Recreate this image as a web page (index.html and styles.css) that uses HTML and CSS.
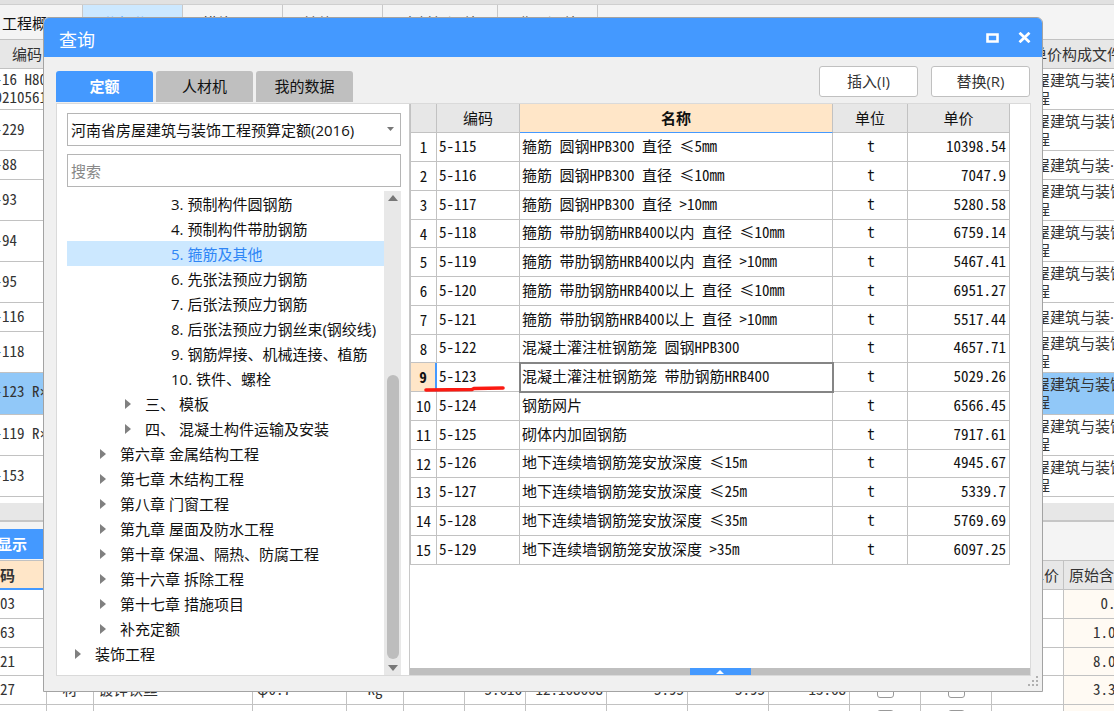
FILE: index.html
```
<!DOCTYPE html>
<html lang="zh-CN">
<head>
<meta charset="utf-8">
<title>查询</title>
<link rel="stylesheet" href="styles.css">
</head>
<body>
<svg class="defs" aria-hidden="true">
  <symbol id="caret" viewBox="0 0 6 10"><path d="M0 0 6 5 0 10z" fill="#808080"/></symbol>
</svg>

<main class="workspace">
  <div class="topstrip"></div>
  <nav class="pages">
    <button class="page page-first">工程概况</button>
    <button class="page page-active">分部分项</button>
    <button class="page">措施项目</button>
    <button class="page">其他项目</button>
    <button class="page page-wide">人材机汇总</button>
    <button class="page">费用汇总</button>
  </nav>

  <div class="sheet-wrap">
    <table class="sheet">
      <colgroup><col class="s-code"><col><col class="s-file"></colgroup>
      <thead><tr><th>编码</th><th></th><th class="file">单价构成文件</th></tr></thead>
      <tbody>
        <tr><td>5-16 H80<br>80210561</td><td></td><td class="file">屋建筑与装饰工程</td></tr>
        <tr><td>5-229</td><td></td><td class="file">屋建筑与装饰工程</td></tr>
        <tr class="short"><td>5-88</td><td></td><td class="file">屋建筑与装···</td></tr>
        <tr><td>5-93</td><td></td><td class="file">屋建筑与装饰工程</td></tr>
        <tr><td>5-94</td><td></td><td class="file">屋建筑与装饰工程</td></tr>
        <tr><td>5-95</td><td></td><td class="file">屋建筑与装饰工程</td></tr>
        <tr class="short"><td>5-116</td><td></td><td class="file">屋建筑与装···</td></tr>
        <tr><td>5-118</td><td></td><td class="file">屋建筑与装饰工程</td></tr>
        <tr class="current"><td>5-123 R<span class="times">×</span></td><td></td><td class="file">屋建筑与装饰工程</td></tr>
        <tr><td>5-119 R<span class="times">×</span></td><td></td><td class="file">屋建筑与装饰工程</td></tr>
        <tr><td>5-153</td><td></td><td class="file">屋建筑与装饰工程</td></tr>
      </tbody>
    </table>
  </div>

  <div class="hscroll"></div>
  <div class="subtabs"><button class="subtab">显示</button></div>

  <div class="detail-wrap">
    <table class="detail">
      <colgroup>
        <col class="w46"><col class="w48"><col class="w159"><col class="w94"><col class="w57"><col class="w61"><col class="w61"><col class="w80"><col class="w81"><col class="w81"><col class="w81"><col class="w71"><col class="w71"><col><col class="w78">
      </colgroup>
      <thead><tr><th class="hot">码</th><th>类别</th><th>名称</th><th>规格</th><th>单位</th><th></th><th></th><th></th><th></th><th></th><th></th><th></th><th></th><th class="price">供应单价</th><th class="raw">原始含量</th></tr></thead>
      <tbody>
        <tr><td>03</td><td></td><td></td><td></td><td></td><td></td><td></td><td></td><td></td><td></td><td></td><td></td><td></td><td></td><td class="num tint">0.616</td></tr>
        <tr><td>63</td><td></td><td></td><td></td><td></td><td></td><td></td><td></td><td></td><td></td><td></td><td></td><td></td><td></td><td class="num tint">1.0200</td></tr>
        <tr><td>21</td><td></td><td></td><td></td><td></td><td></td><td></td><td></td><td></td><td></td><td></td><td></td><td></td><td></td><td class="num tint">8.0900</td></tr>
        <tr><td>27</td><td class="mid">材</td><td class="name">镀锌铁丝</td><td class="name">φ0.7</td><td class="mid">kg</td><td></td><td class="num">5.616</td><td class="num">12.168668</td><td class="num">5.95</td><td class="num">5.95</td><td class="num">13.68</td><td class="mid"><input type="checkbox" aria-label="是否暂估"></td><td class="mid"><input type="checkbox" aria-label="锁定"></td><td></td><td class="num tint">3.3730</td></tr>
        <tr><td></td><td class="mid">材</td><td class="name">水</td><td></td><td></td><td></td><td></td><td></td><td></td><td></td><td></td><td class="mid"><input type="checkbox" aria-label="是否暂估"></td><td class="mid"><input type="checkbox" aria-label="锁定"></td><td></td><td class="num tint"></td></tr>
      </tbody>
    </table>
  </div>
</main>

<section class="dialog" role="dialog" aria-labelledby="dialog-title">
  <header class="titlebar">
    <h1 id="dialog-title">查询</h1>
    <button class="winbtn" aria-label="最大化"><svg width="13" height="10" viewBox="0 0 13 10"><path d="M1.5 1.5h10v7h-10z" fill="none" stroke="#fff" stroke-width="2.6"/></svg></button>
    <button class="winbtn" aria-label="关闭"><svg width="13" height="11" viewBox="0 0 13 11"><path d="M1.5.8 11.5 10.2M11.5.8 1.5 10.2" stroke="#fff" stroke-width="2.8"/></svg></button>
  </header>

  <div class="toolbar">
    <div class="tabs" role="tablist">
      <button class="tab tab-active" role="tab" aria-selected="true">定额</button>
      <button class="tab" role="tab">人材机</button>
      <button class="tab" role="tab">我的数据</button>
    </div>
    <div class="actions">
      <button class="action">插入(I)</button>
      <button class="action">替换(R)</button>
    </div>
  </div>

  <div class="panes">
    <div class="side">
      <div class="combo">
        <select aria-label="定额库"><option>河南省房屋建筑与装饰工程预算定额(2016)</option></select>
        <svg class="combo-arrow" width="7" height="4" viewBox="0 0 7 4"><path d="M0 0h7L3.5 4z" fill="#777"/></svg>
      </div>
      <input class="search" type="text" placeholder="搜索" aria-label="搜索">
      <div class="tree-box">
        <ul class="tree" role="tree">
          <li class="leaf" role="treeitem">3. 预制构件圆钢筋</li>
          <li class="leaf" role="treeitem">4. 预制构件带肋钢筋</li>
          <li class="leaf chosen" role="treeitem" aria-selected="true">5. 箍筋及其他</li>
          <li class="leaf" role="treeitem">6. 先张法预应力钢筋</li>
          <li class="leaf" role="treeitem">7. 后张法预应力钢筋</li>
          <li class="leaf" role="treeitem">8. 后张法预应力钢丝束(钢绞线)</li>
          <li class="leaf" role="treeitem">9. 钢筋焊接、机械连接、植筋</li>
          <li class="leaf" role="treeitem">10. 铁件、螺栓</li>
          <li class="part" role="treeitem"><svg class="caret"><use href="#caret"/></svg>三、 模板</li>
          <li class="part" role="treeitem"><svg class="caret"><use href="#caret"/></svg>四、 混凝土构件运输及安装</li>
          <li class="chapter" role="treeitem"><svg class="caret"><use href="#caret"/></svg>第六章 金属结构工程</li>
          <li class="chapter" role="treeitem"><svg class="caret"><use href="#caret"/></svg>第七章 木结构工程</li>
          <li class="chapter" role="treeitem"><svg class="caret"><use href="#caret"/></svg>第八章 门窗工程</li>
          <li class="chapter" role="treeitem"><svg class="caret"><use href="#caret"/></svg>第九章 屋面及防水工程</li>
          <li class="chapter" role="treeitem"><svg class="caret"><use href="#caret"/></svg>第十章 保温、隔热、防腐工程</li>
          <li class="chapter" role="treeitem"><svg class="caret"><use href="#caret"/></svg>第十六章 拆除工程</li>
          <li class="chapter" role="treeitem"><svg class="caret"><use href="#caret"/></svg>第十七章 措施项目</li>
          <li class="chapter" role="treeitem"><svg class="caret"><use href="#caret"/></svg>补充定额</li>
          <li class="root" role="treeitem"><svg class="caret"><use href="#caret"/></svg>装饰工程</li>
        </ul>
        <div class="scroll">
          <svg width="10" height="6" viewBox="0 0 10 6"><path d="M0 6h10L5 0z" fill="#777"/></svg>
          <div class="track"><div class="thumb"></div></div>
          <svg width="10" height="6" viewBox="0 0 10 6"><path d="M0 0h10L5 6z" fill="#777"/></svg>
        </div>
      </div>
    </div>

    <div class="main">
      <div class="grid-area">
        <table class="grid">
          <colgroup><col class="g-no"><col class="g-code"><col><col class="g-unit"><col class="g-price"></colgroup>
          <thead><tr><th></th><th>编码</th><th class="hot">名称</th><th>单位</th><th>单价</th></tr></thead>
          <tbody>
            <tr><th>1</th><td>5-115</td><td>箍筋 圆钢HPB300 直径 ≤5mm</td><td class="mid">t</td><td class="num">10398.54</td></tr>
            <tr><th>2</th><td>5-116</td><td>箍筋 圆钢HPB300 直径 ≤10mm</td><td class="mid">t</td><td class="num">7047.9</td></tr>
            <tr><th>3</th><td>5-117</td><td>箍筋 圆钢HPB300 直径 &gt;10mm</td><td class="mid">t</td><td class="num">5280.58</td></tr>
            <tr><th>4</th><td>5-118</td><td>箍筋 带肋钢筋HRB400以内 直径 ≤10mm</td><td class="mid">t</td><td class="num">6759.14</td></tr>
            <tr><th>5</th><td>5-119</td><td>箍筋 带肋钢筋HRB400以内 直径 &gt;10mm</td><td class="mid">t</td><td class="num">5467.41</td></tr>
            <tr><th>6</th><td>5-120</td><td>箍筋 带肋钢筋HRB400以上 直径 ≤10mm</td><td class="mid">t</td><td class="num">6951.27</td></tr>
            <tr><th>7</th><td>5-121</td><td>箍筋 带肋钢筋HRB400以上 直径 &gt;10mm</td><td class="mid">t</td><td class="num">5517.44</td></tr>
            <tr><th>8</th><td>5-122</td><td>混凝土灌注桩钢筋笼 圆钢HPB300</td><td class="mid">t</td><td class="num">4657.71</td></tr>
            <tr class="picked"><th>9<svg class="mark" width="82" height="7" viewBox="0 0 82 7"><path d="M2 5 48 4.500 50 3.500 79 3" fill="none" stroke="#fb1a12" stroke-width="3.600" stroke-linecap="round"/></svg></th><td>5-123</td><td class="cursor">混凝土灌注桩钢筋笼 带肋钢筋HRB400</td><td class="mid">t</td><td class="num">5029.26</td></tr>
            <tr><th>10</th><td>5-124</td><td>钢筋网片</td><td class="mid">t</td><td class="num">6566.45</td></tr>
            <tr><th>11</th><td>5-125</td><td>砌体内加固钢筋</td><td class="mid">t</td><td class="num">7917.61</td></tr>
            <tr><th>12</th><td>5-126</td><td>地下连续墙钢筋笼安放深度 ≤15m</td><td class="mid">t</td><td class="num">4945.67</td></tr>
            <tr><th>13</th><td>5-127</td><td>地下连续墙钢筋笼安放深度 ≤25m</td><td class="mid">t</td><td class="num">5339.7</td></tr>
            <tr><th>14</th><td>5-128</td><td>地下连续墙钢筋笼安放深度 ≤35m</td><td class="mid">t</td><td class="num">5769.69</td></tr>
            <tr><th>15</th><td>5-129</td><td>地下连续墙钢筋笼安放深度 &gt;35m</td><td class="mid">t</td><td class="num">6097.25</td></tr>
          </tbody>
        </table>
      </div>
      <div class="splitter"><button class="splitter-grip" aria-label="展开"><svg width="8" height="4" viewBox="0 0 8 4"><path d="M0 4h8L4 0z" fill="#fff"/></svg></button></div>
    </div>
  </div>
  <svg class="resize" width="10" height="10" viewBox="0 0 10 10"><path d="M8 0h2v2H8zM4 4h2v2H4zM8 4h2v2H8zM0 8h2v2H0zM4 8h2v2H4zM8 8h2v2H8z" fill="#b0b0b0"/></svg>
</section>
</body>
</html>
```
FILE: styles.css
```
:root {
  --ui: "Open Sans", "Noto Sans CJK SC", sans-serif;
  --cell: "Noto Sans Mono CJK SC", "Liberation Mono", "Noto Sans CJK SC", monospace;
  --blue: #4499ff;
  --line: #c2c2c2;
  --head: #e7e7e7;
  --hot: #ffe6c8;
}

* { box-sizing: border-box; }

body {
  margin: 0;
  height: 100vh;
  overflow: hidden;
  position: relative;
  background: #fff;
  color: #111;
  font: 15px/20px var(--ui);
}

button, input, select { font: inherit; color: inherit; margin: 0; }
button { border: 0; padding: 0; background: none; white-space: nowrap; }
table { border-collapse: separate; border-spacing: 0; table-layout: fixed; }
th, td { padding: 0; border: 0 solid var(--line); border-width: 0 1px 1px 0; white-space: nowrap; overflow: hidden; }
th { font-weight: 400; }
.defs { position: absolute; width: 0; height: 0; }

/* main window */
.workspace { display: flex; flex-direction: column; height: 100%; overflow: hidden; color: #333; }
.topstrip { flex: none; height: 5px; background: #e1e1e1; border-bottom: 1px solid #cfcfcf; }
.pages { flex: none; display: flex; height: 34px; background: #f4f4f4; }
.page { width: 100px; padding-top: 2px; border-right: 1px solid #c8c8c8; }
.page-first { width: 83px; padding-left: 2px; text-align: left; color: #111; }
.page-wide { width: 115px; }
.page-active { background: #cce8ff; color: var(--blue); }

.sheet-wrap, .detail-wrap { flex: none; overflow: hidden; }
.sheet { width: calc(100% + 43px); margin-left: -16px; font: 15px/18px var(--cell); }
.s-code { width: 80px; }
.s-file { width: 109px; }
.sheet th { height: 30px; background: var(--head); border-top: 1px solid var(--line); text-align: left; padding-left: 28px; font: 15px/20px var(--ui); }
.sheet td { height: 41px; padding: 0 0 2px 3px; border-right: 0; }
.sheet .short td { height: 29px; }
.sheet th.file { padding-left: 0; }
.sheet td.file { padding: 0 0 1px 3px; white-space: normal; word-break: break-all; font-family: var(--ui); }
.sheet .current td { background: #91c8f8; height: 42px; }
.times { font-family: "Liberation Mono", monospace; }

.hscroll { flex: none; height: 19px; margin-top: 6px; background: var(--head); border-bottom: 2px solid #c6c6c6; }
.subtabs { flex: none; height: 38px; padding-top: 7px; background: #f4f4f4; }
.subtab { width: 120px; height: 30px; margin-left: -3px; background: var(--blue); color: #fff; font-weight: 700; text-align: left; }

.detail { width: calc(100% + 28px); font: 15px/18px var(--cell); }
.detail th { height: 30px; background: var(--head); border-top: 1px solid var(--line); font: 15px/20px var(--ui); }
.detail td { height: 29px; padding-bottom: 2px; }
.detail tr:nth-child(3) td { height: 28px; }
.detail .hot { text-align: left; font-weight: 700; background: var(--hot); border-bottom: 2px solid var(--blue); }
.detail .price { padding-right: 4px; text-align: right; }
.detail .raw { padding-left: 5px; text-align: left; }
.detail .name { padding-left: 4px; }
.detail .tint { background: #fffaf3; }
.detail input { appearance: none; display: block; width: 17px; height: 17px; margin: 0 auto; border: 1px solid #999; border-radius: 3px; background: #fff; }
.w46 { width: 47px; }
.w48 { width: 47px; }
.w57 { width: 57px; }
.w61 { width: 61px; }
.w71 { width: 71px; }
.w78 { width: 78px; }
.w80 { width: 81px; }
.w81 { width: 81px; }
.w94 { width: 94px; }
.w159 { width: 159px; }

td.mid { text-align: center; }
td.num { text-align: right; padding-right: 3px; }

/* query dialog floating over the window */
.dialog {
  position: absolute;
  inset: 17px 71px 19px 43px;
  display: flex;
  flex-direction: column;
  padding-bottom: 15px;
  background: #f0f0f0;
  border: 1px solid #a3a3a3;
  border-radius: 6px 6px 0 0;
  overflow: hidden;
}
.titlebar { flex: none; display: flex; align-items: center; gap: 19px; height: 39px; padding: 0 11px 0 15px; background: var(--blue); color: #fff; }
.titlebar h1 { flex: 1; margin: 4px 0 0; font: 400 18px/24px var(--ui); }
.winbtn { display: flex; }

.toolbar { flex: none; display: flex; justify-content: space-between; align-items: flex-end; height: 46px; padding: 0 12px 1px 12px; }
.tabs { display: flex; gap: 3px; }
.tab { width: 97px; height: 31px; padding-bottom: 2px; background: #bfbfbf; border-radius: 3px 3px 0 0; }
.tab-active { background: var(--blue); color: #fff; font-weight: 700; }
.actions { display: flex; gap: 13px; padding-bottom: 5px; }
.action { width: 99px; height: 31px; padding-bottom: 2px; background: #fff; border: 1px solid #c0c0c0; border-radius: 3px; color: #333; }

.panes { flex: 1; min-height: 0; display: flex; margin: 0 11px 0 12px; background: #fff; border: 1px solid #dadada; }
.side { flex: none; width: 352px; display: flex; flex-direction: column; gap: 8px; padding: 9px 8px 0 10px; }
.combo { position: relative; flex: none; height: 33px; }
.combo select { appearance: none; width: 100%; height: 100%; padding: 0 24px 0 3px; background: #fff; border: 1px solid #b5b5b5; border-radius: 0; }
.combo-arrow { position: absolute; right: 7px; top: 14px; }
.search { flex: none; width: 100%; height: 33px; padding: 0 3px; border: 1px solid #b5b5b5; border-radius: 0; }
.search::placeholder { color: #888; }
.tree-box { flex: 1; min-height: 0; display: flex; margin-top: -4px; }
.tree { flex: 1; margin: 0; padding: 0; list-style: none; overflow: hidden; }
.tree li { display: flex; align-items: center; height: 25px; white-space: pre; }
.caret { flex: none; width: 6px; height: 10px; margin-right: 14px; }
.leaf { padding-left: 104px; }
.part { padding-left: 58px; }
.chapter { padding-left: 33px; }
.root { padding-left: 8px; }
.chosen { background: #cce8ff; color: #2f86f6; }
.scroll { flex: none; width: 17px; display: flex; flex-direction: column; align-items: center; justify-content: space-between; padding: 4px 0; background: #e8e8e8; }
.track { flex: 1; width: 12px; display: flex; flex-direction: column; justify-content: flex-end; padding-bottom: 6px; }
.thumb { height: 62%; background: #bdbdbd; border-radius: 6px; }

.main { flex: 1; min-width: 0; display: flex; flex-direction: column; border-left: 1px solid #c8c8c8; }
.grid-area { flex: 1; min-height: 0; padding-right: 20px; overflow: hidden; }
.grid { width: 100%; font: 15px/18px var(--cell); color: #111; border-left: 1px solid var(--line); }
.g-no { width: 26px; }
.g-code { width: 83px; }
.g-unit { width: 75px; }
.g-price { width: 102px; }
.grid thead th { height: 29px; background: var(--head); font-family: var(--ui); }
.grid thead .hot { background: var(--hot); border-bottom-color: var(--blue); font-weight: 700; }
.grid tbody th, .grid tbody td { height: 29px; }
.grid tbody tr:nth-child(4n) > * { height: 28px; }
.grid tbody td { padding-bottom: 3px; }
.grid td { padding-left: 2px; }
.grid .picked th { position: relative; overflow: visible; background: var(--hot); border-right: 2px solid var(--blue); font-weight: 700; }
.grid .cursor { outline: 2px solid #858585; outline-offset: -1px; }
.mark { position: absolute; left: 13px; top: 22px; }

.splitter { flex: none; display: flex; justify-content: center; height: 7px; background: #bfbfbf; }
.splitter-grip { display: flex; align-items: center; justify-content: center; width: 61px; background: var(--blue); }
.resize { position: absolute; right: 4px; bottom: 5px; }
```
